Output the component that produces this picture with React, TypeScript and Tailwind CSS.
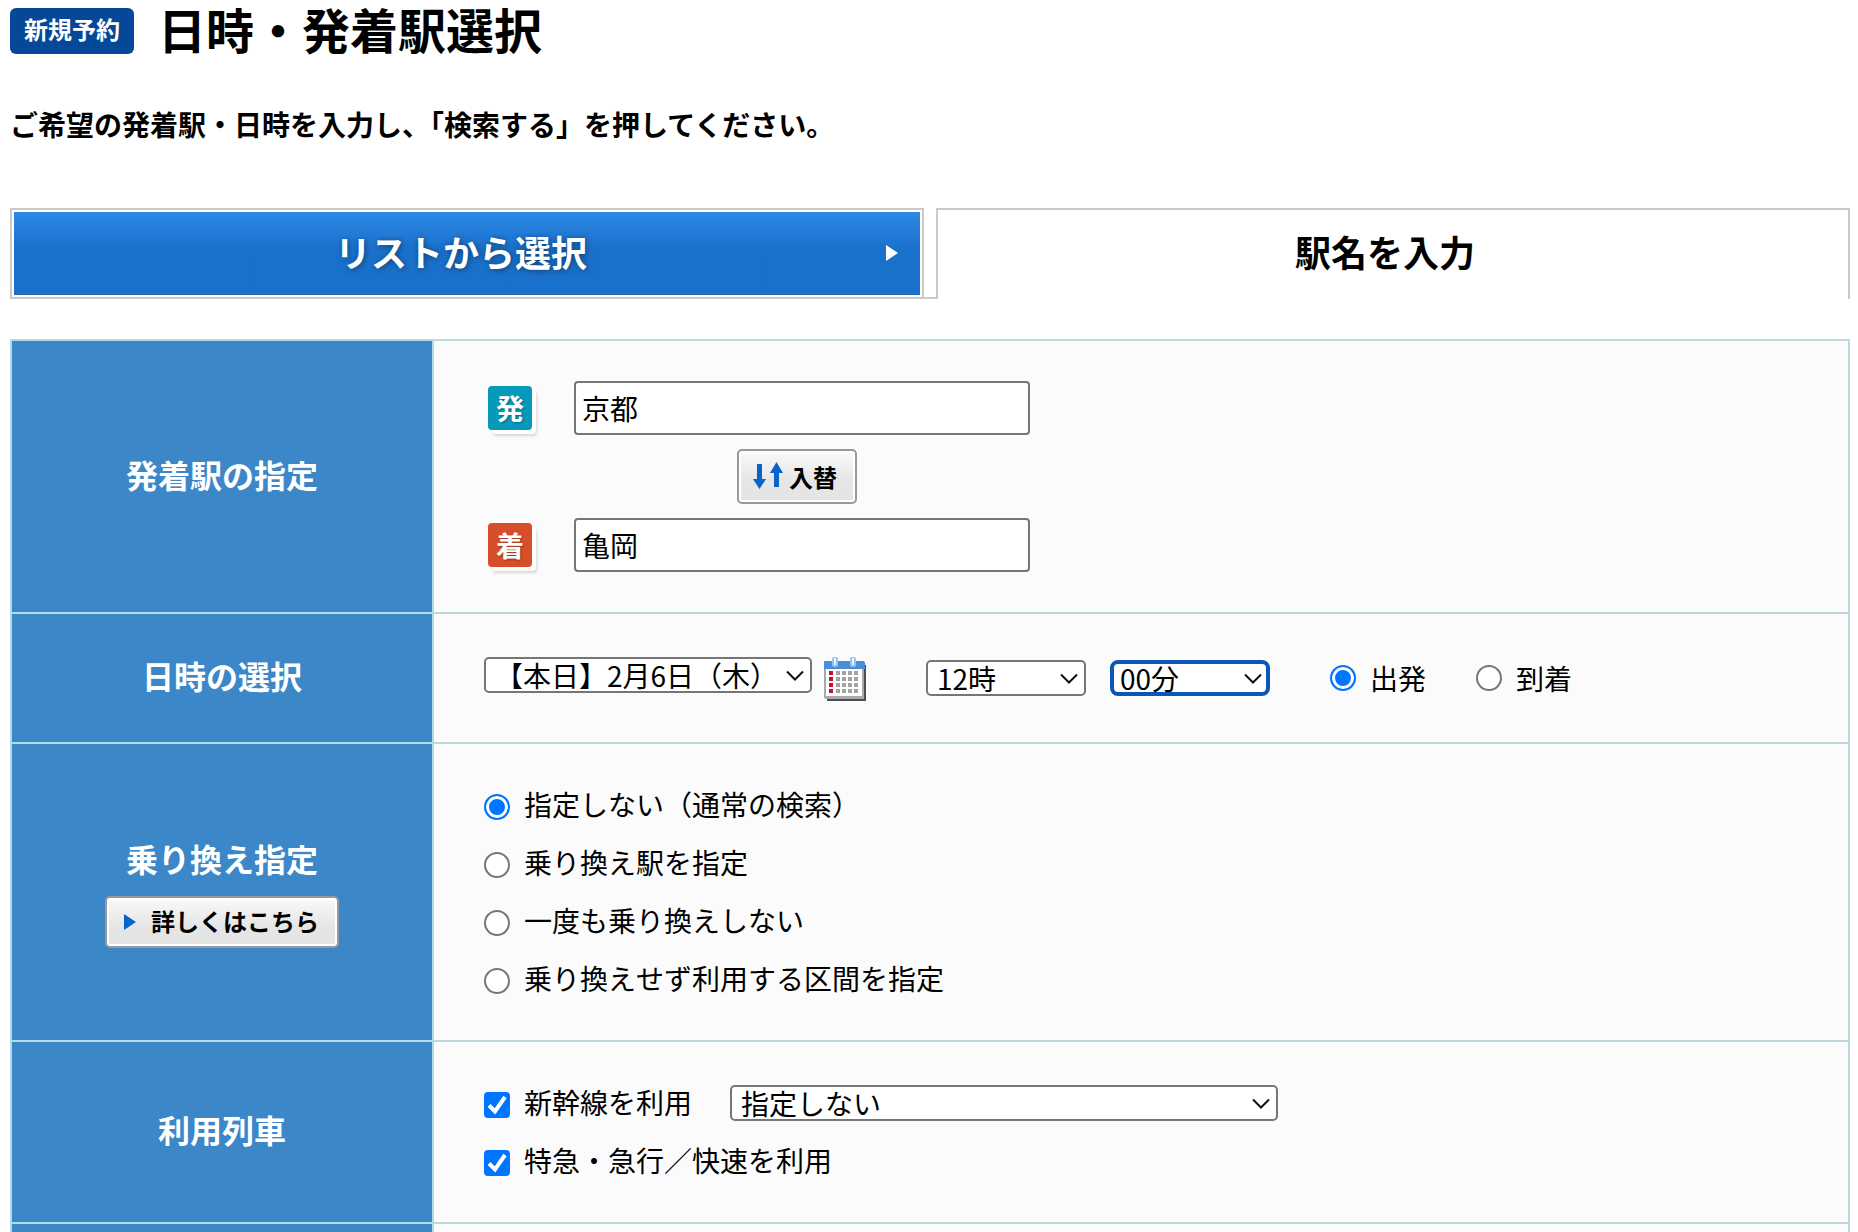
import { useState, type ReactNode } from "react";

const transferOptions = [
  "指定しない（通常の検索）",
  "乗り換え駅を指定",
  "一度も乗り換えしない",
  "乗り換えせず利用する区間を指定",
];

const radioClass =
  "size-[26px] shrink-0 appearance-none rounded-full border-2 border-[#767676] bg-white checked:border-[#0075ff] checked:bg-[#0075ff] checked:shadow-[inset_0_0_0_3px_#fff]";

function Row({ title, extra, children }: { title: string; extra?: ReactNode; children?: ReactNode }) {
  return (
    <tr>
      <th scope="row" className="w-[422px] border-2 border-[#b0dbe8] bg-[#3c87c8] p-0 pb-[2px] text-center align-middle font-bold text-white">
        <div className="pb-1 text-[32px] leading-[48px]">{title}</div>
        {extra}
      </th>
      <td className="border-2 border-[#bcd9df] bg-[#fbfbfc] p-0 pl-[50px] align-middle">{children}</td>
    </tr>
  );
}

function Select({ label, value, wide, focused }: { label: string; value: string; wide: string; focused?: boolean }) {
  return (
    <div className={`relative ${wide}`}>
      <select
        aria-label={label}
        defaultValue={value}
        className={
          focused
            ? "block h-9 w-full appearance-none rounded-lg border-4 border-[#0b57b8] bg-white pl-[6px] text-[28px] leading-7 text-black outline-none"
            : "block h-9 w-full appearance-none rounded-[5px] border-2 border-[#767676] bg-white pl-[9px] text-[28px] leading-8 text-black outline-none"
        }
      >
        <option>{value}</option>
      </select>
      <svg className="pointer-events-none absolute top-[13px] right-[8px]" width="18" height="11" viewBox="0 0 18 11" fill="none" stroke="#111" strokeWidth="2">
        <path d="M1 1.5l8 8 8-8" />
      </svg>
    </div>
  );
}

function StationField({ mark, color, id, label, value }: { mark: string; color: string; id: string; label: string; value: string }) {
  return (
    <div className="flex items-center">
      <label
        htmlFor={id}
        aria-label={label}
        className={`ml-1 mr-[42px] flex size-11 items-center justify-center rounded-[4px] text-[28px] leading-none font-bold text-white shadow-[4px_4px_0_#fff,5px_6px_3px_rgba(0,0,0,0.15)] text-shadow-[1px_1px_2px_rgba(0,0,0,0.3)] ${color}`}
      >
        {mark}
      </label>
      <input
        id={id}
        type="text"
        defaultValue={value}
        className="h-[54px] w-[456px] rounded-[4px] border-2 border-[#767676] bg-white px-[6px] text-[28px] leading-10 text-black outline-none"
      />
    </div>
  );
}

function TrainCheckbox({ id, label }: { id: string; label: string }) {
  return (
    <div className="flex h-[58px] items-center">
      <span className="relative mr-[14px] size-[26px]">
        <input id={id} type="checkbox" defaultChecked className="peer block size-[26px] appearance-none rounded-[4px] border-2 border-[#767676] bg-white checked:border-[#0075ff] checked:bg-[#0075ff]" />
        <svg className="pointer-events-none absolute inset-0 hidden peer-checked:block" width="26" height="26" viewBox="0 0 26 26" fill="none" stroke="#fff" strokeWidth="4">
          <path d="M5 13.5l6 6L21 5" />
        </svg>
      </span>
      <label htmlFor={id} className="pb-[6px]">
        {label}
      </label>
    </div>
  );
}

function CalendarIcon() {
  return (
    <svg width="42" height="44" viewBox="0 0 42 44">
      <path d="M3 8h39v36H3z" fill="#4d4d55" />
      <path d="M0 5h40v37H2q-2 0-2-2z" fill="#a9a9ab" />
      <path d="M2 12h36v27H2z" fill="#fff" />
      <path d="M0 5q0-1 1-1h38q2 0 2 2v6H0z" fill="#4a8fd6" />
      {[9, 27].map((x) => (
        <g key={x}>
          <rect x={x - 1} y="0" width="6" height="10" rx="2" fill="#8fc4f7" />
          <rect x={x + 1} y="1" width="2" height="7" fill="#e6f3ff" />
        </g>
      ))}
      {[14, 20, 26, 32].map((y) =>
        [5, 12, 18, 24, 30].map((x) => (
          <rect key={`${x}-${y}`} x={x} y={y} width="4" height="4" fill={x === 5 ? "#cc1020" : "#a3a3a3"} />
        )),
      )}
    </svg>
  );
}

export default function App() {
  const [transfer, setTransfer] = useState(transferOptions[0]);

  return (
    <main className="bg-white pr-2 pl-[10px] font-['Noto_Sans_CJK_JP',sans-serif] text-[28px] leading-10 text-black" lang="ja">
      {/* Page heading */}
      <div className="flex items-start gap-6">
        <span className="mt-2 flex h-[46px] w-[124px] items-center justify-center rounded-[6px] bg-[#064898] pb-1 text-[24px] font-bold text-white">
          新規予約
        </span>
        <h1 className="text-[48px] leading-[56px] font-bold">日時・発着駅選択</h1>
      </div>
      <p className="mt-12 font-bold">ご希望の発着駅・日時を入力し、「検索する」を押してください。</p>

      {/* Input method tabs */}
      <div className="mt-16 grid h-[91px] grid-cols-[1fr_12px_1fr]">
        <button type="button" className="border-2 border-[#c9c9c9] bg-white p-[2px] text-[36px] font-bold text-white">
          <span className="flex h-full items-center border-b border-[#2465ab] bg-linear-to-b from-[#2d89e5] to-[#1a71cc] to-45% px-[22px]">
            <span className="flex-1 pb-1 text-shadow-[1px_1px_6px_rgba(0,0,0,0.45)]">リストから選択</span>
            <svg width="12" height="16" viewBox="0 0 12 16" fill="#fff">
              <path d="M0 0l12 8-12 8z" />
            </svg>
          </span>
        </button>
        <div className="border-b-2 border-[#c9c9c9]" />
        <button type="button" className="border-2 border-b-0 border-[#c9c9c9] bg-white pr-4 pb-2 text-[36px] font-bold">
          駅名を入力
        </button>
      </div>

      {/* Search form */}
      <table className="mt-10 w-full border-collapse">
        <tbody>
          <Row title="発着駅の指定">
            <div className="flex flex-col gap-[14px] py-10">
              <StationField mark="発" color="bg-[#0699b9]" id="from" label="出発駅" value="京都" />
              <button
                type="button"
                className="ml-[253px] flex h-[55px] w-[120px] items-center justify-center gap-[6px] rounded-[5px] border-2 border-[#999] bg-linear-to-b from-[#fafafa] to-[#e5e5e5] to-60% pr-1 text-[24px] font-bold shadow-[inset_0_0_0_2px_#fff]"
              >
                <svg width="30" height="32" viewBox="0 0 30 32" fill="#0a63cc">
                  <path d="M4 3h5v15h4L6.500 28 0 18h4z" />
                  <path d="M21 26h5V12h4L23.500 1 17 12h4z" />
                </svg>
                入替
              </button>
              <StationField mark="着" color="bg-[#d64f2a]" id="to" label="到着駅" value="亀岡" />
            </div>
          </Row>

          <Row title="日時の選択">
            <div className="flex h-32 items-center">
              <div className="flex items-start gap-3 pt-[2px]">
                <Select label="日付" value="【本日】2月6日（木）" wide="w-[328px]" />
                <button type="button" aria-label="カレンダー">
                  <CalendarIcon />
                </button>
              </div>
              <div className="ml-[60px] flex gap-6">
                <Select label="時" value="12時" wide="w-[160px]" />
                <Select label="分" value="00分" wide="w-[160px]" focused />
              </div>
              <label className="ml-[60px] flex items-center gap-[14px]">
                <input type="radio" name="timeType" defaultChecked className={radioClass} />
                出発
              </label>
              <label className="ml-[50px] flex items-center gap-[14px]">
                <input type="radio" name="timeType" className={radioClass} />
                到着
              </label>
            </div>
          </Row>

          <Row
            title="乗り換え指定"
            extra={
              <button
                type="button"
                className="mx-auto mt-[10px] flex h-[52px] w-[234px] items-center gap-[15px] rounded-[5px] border-2 border-[#999] bg-linear-to-b from-[#fafafa] to-[#e5e5e5] to-60% pl-[17px] text-[24px] font-bold text-black shadow-[inset_0_0_0_2px_#fff]"
              >
                <svg width="12" height="16" viewBox="0 0 12 16" fill="#0a63cc">
                  <path d="M0 0l12 8-12 8z" />
                </svg>
                <span className="pb-[3px]">詳しくはこちら</span>
              </button>
            }
          >
            <div className="pt-[34px] pb-[30px]">
              {transferOptions.map((option) => (
                <label key={option} className="flex h-[58px] items-center gap-[14px]">
                  <input
                    type="radio"
                    name="transfer"
                    checked={transfer === option}
                    onChange={() => setTransfer(option)}
                    className={radioClass}
                  />
                  <span className="pb-[6px]">{option}</span>
                </label>
              ))}
            </div>
          </Row>

          <Row title="利用列車">
            <div className="pt-[34px] pb-[30px]">
              <div className="flex items-center gap-[38px]">
                <TrainCheckbox id="shinkansen" label="新幹線を利用" />
                <div className="pb-1">
                  <Select label="新幹線の種別" value="指定しない" wide="w-[548px]" />
                </div>
              </div>
              <TrainCheckbox id="express" label="特急・急行／快速を利用" />
            </div>
          </Row>

          <tr>
            <th className="h-[9px] border-2 border-b-0 border-[#b0dbe8] bg-[#3c87c8] p-0" />
            <td className="border-2 border-b-0 border-[#bcd9df] bg-[#fbfbfc] p-0" />
          </tr>
        </tbody>
      </table>
    </main>
  );
}
